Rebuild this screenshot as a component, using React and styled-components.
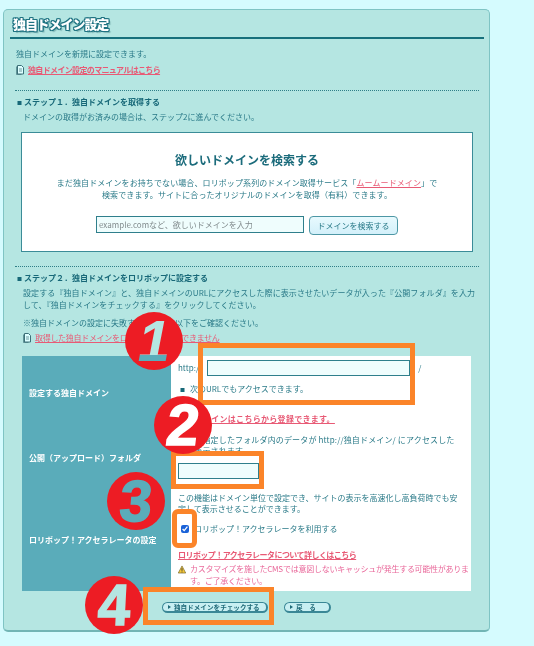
import React from "react";
import styled, { createGlobalStyle } from "styled-components";

const Global = createGlobalStyle`
  html, body { margin: 0; padding: 0; background: #d5fbfe; }
  body { width: 534px; height: 646px; overflow: hidden; font-family: "Noto Sans CJK JP", "Liberation Sans", sans-serif; font-size: 8px; line-height: 12px; color: #2a7a88; }
`;
const Page = styled.div`position: relative; width: 534px; height: 646px; padding: 9px 0 0 3px; box-sizing: border-box;`;
const Panel = styled.div`
  width: 487px; height: 623px; box-sizing: border-box; background: #b5e6e2; filter: blur(0.25px);
  border: 1px solid #7fc4c4; border-bottom: 2px solid #72b5b5; border-radius: 5px; padding: 5px 5px 0 6px;
`;
const Title = styled.h1`
  margin: 0; height: 22px; padding-left: 3px; border-bottom: 2px solid #17707c;
  font-size: 13px; line-height: 18px; font-weight: 900; color: #fff; letter-spacing: -1.1px;
  text-shadow: 1px 0 0 #1f7382, -1px 0 0 #1f7382, 0 1px 0 #1f7382, 0 -1px 0 #1f7382, 1px 1px 0 #1f7382, -1px -1px 0 #1f7382, 1px -1px 0 #1f7382, -1px 1px 0 #1f7382, 2px 2px 1px #7fb5b5;
`;
const Intro = styled.div`padding: 9px 0 0 6px; height: 42px;`;
const Line = styled.p`margin: 0 0 4px; height: 12px; white-space: nowrap;`;
const LinkRow = styled.div`display: flex; align-items: center; gap: 4px; height: 12px; white-space: nowrap; margin: ${p => p.$m || "0"};`;
const RedLink = styled.a`color: #e85a75; text-decoration: underline; font-weight: ${p => p.$bold ? 700 : 400}; letter-spacing: ${p => p.$ls || 0}px; white-space: nowrap;`;
const Divider = styled.div`border-top: 1px dotted #2f7f88; margin-left: 5px; width: 464px;`;
const Section = styled.section`padding: 5px 0 0 7px; height: ${p => p.$h}px; box-sizing: border-box;`;
const Heading = styled.h2`margin: 0; font-size: 8px; line-height: 12px; font-weight: 700; color: #176878; white-space: nowrap;`;
const Bullet = styled.span`display: inline-block; width: ${p => p.$w || 7}px; font-size: 5px; vertical-align: 1px; color: #176878;`;
const Desc = styled.p`margin: ${p => p.$mt ?? 3}px 0 0 6px; white-space: nowrap; letter-spacing: ${p => p.$ls || 0}px; line-height: 12px;`;
const SearchBox = styled.div`
  width: 452px; height: 120px; box-sizing: border-box; margin: 9px 0 0 4px; background: #fff; border: 1px solid #3b8c98;
  display: flex; flex-direction: column; align-items: center; padding-top: 19px;
`;
const SearchTitle = styled.h3`margin: 0; font-size: 12px; line-height: 16px; font-weight: 700; color: #1c6c7c;`;
const SearchText = styled.p`margin: 9px 0 0; text-align: center; line-height: 12px; letter-spacing: 0.1px; white-space: nowrap;`;
const SearchRow = styled.div`display: flex; gap: 5px; margin-top: 15px;`;
const TextInput = styled.input`
  display: block; box-sizing: border-box; width: ${p => p.$w}px; height: ${p => p.$h}px; background: #effdfd; border: 1px solid #2f7f8c;
  padding: 0 2px; font: 8px "Noto Sans CJK JP", sans-serif; margin: ${p => p.$mt || 0}px 0 0; outline: none; border-radius: 0;
  &::placeholder { color: #808a8c; opacity: 1; }
`;
const SearchButton = styled.button`
  width: 89px; height: 19px; padding: 0; border: 1px solid #4d97a5; border-radius: 4px; background: linear-gradient(#e8fafe, #d3f0fa);
  color: #2a7a88; font: 8px "Noto Sans CJK JP", sans-serif;
`;
const Table = styled.div`
  margin: 12px 0 0 5px; width: 449px; display: grid; grid-template-columns: 149px 300px; grid-template-rows: 73px 58px 104px;
`;
const Label = styled.div`
  background: #5aacba; color: #fff; font-weight: 700; display: flex; align-items: center; padding-left: 7px; white-space: nowrap;
  padding-top: ${p => p.$pt || 0}px; box-sizing: border-box;
`;
const Cell = styled.div`background: #fff; padding: 5px 0 0 7px; box-sizing: border-box;`;
const UrlRow = styled.div`display: flex; align-items: center; gap: 5px; height: 16px; white-space: nowrap; margin-top: -1px;`;
const Slash = styled.span`margin-left: 3px;`;
const CellLine = styled.p`margin: ${p => p.$mt || 0}px 0 0 ${p => p.$ml || 0}px; white-space: nowrap; letter-spacing: ${p => p.$ls || 0}px; line-height: ${p => p.$lh || 12}px;`;
const CheckRow = styled.label`display: flex; align-items: center; gap: 5px; margin: 9px 0 0 3px; height: 12px; white-space: nowrap;`;
const Check = styled.input`margin: 0; width: 8px; height: 8px; accent-color: #1a62d8;`;
const Warn = styled.div`display: flex; gap: 4px; margin-top: 2px; color: #e9689a; line-height: 12px; letter-spacing: -0.25px; white-space: nowrap;`;
const Actions = styled.div`display: flex; gap: 16px; padding: 11px 0 0 145px;`;
const ActionButton = styled.button`
  width: ${p => p.$w}px; height: 11px; padding: 0 0 0 11px; position: relative; box-sizing: border-box; border: 1px solid #3a8796; border-right-width: 2px; border-bottom-width: 2px;
  border-radius: 6px; background: #c8eff2; color: #1f6a78; font: 700 6.6px/8px "Noto Sans CJK JP", sans-serif; white-space: nowrap; text-align: left;
  &::before { content: ""; position: absolute; left: 5px; top: 2px; border-left: 3px solid #1f6a78; border-top: 2px solid transparent; border-bottom: 2px solid transparent; }
`;
const Mark = styled.div`
  position: absolute; left: ${p => p.$x}px; top: ${p => p.$y}px; width: 58px; height: 58px; border-radius: 50%; background: #ed1c24;
  display: flex; justify-content: center; filter: blur(0.3px);
`;
const Digit = styled.span`
  display: block; height: 58px; font: 700 58px/58px "Liberation Sans", sans-serif; color: ${p => p.$c};
  -webkit-text-stroke: 1.5px ${p => p.$c}; transform: skewX(-${p => p.$skew}deg);
`;
const SplitDigit = styled.span`
  display: block; height: 58px; font: italic 700 58px/58px "Liberation Sans", sans-serif; color: transparent;
  background: linear-gradient(#b5e6e2 43px, #5aacba 43px); -webkit-background-clip: text; background-clip: text;
`;
const OrangeBox = styled.div`
  position: absolute; left: ${p => p.$x}px; top: ${p => p.$y}px; width: ${p => p.$w}px; height: ${p => p.$h}px; box-sizing: border-box;
  border: 5px solid #fb8429; border-radius: ${p => p.$r || 0}px; pointer-events: none;
`;

const DocIcon = () => (
  <svg width="8" height="10" viewBox="0 0 8 10"><path d="M1.5.5h4l2 2v6.5h-6z" fill="#dff" stroke="#3c7078"/><path d="M.5 1.5v8h5" fill="none" stroke="#3c7078" strokeWidth=".7"/><path d="M3 4h3M3 6h3" stroke="#3c7078" strokeWidth=".7"/></svg>
);
const WarnIcon = () => (
  <svg width="8" height="9" viewBox="0 0 9 9" style={{ flex: "none", marginTop: 2 }}><path d="M4.5.5 8.7 8.5H.3z" fill="#f5c83a" stroke="#6a5a20" strokeWidth=".7"/><path d="M4.5 3v3M4.5 6.8v1" stroke="#333"/></svg>
);

export default function App() {
  return (
    <Page>
      <Global />
      <Panel>
        <Title>独自ドメイン設定</Title>
        <Intro>
          <Line>独自ドメインを新規に設定できます。</Line>
          <LinkRow><DocIcon /><RedLink href="#" $bold $ls={-0.65}>独自ドメイン設定のマニュアルはこちら</RedLink></LinkRow>
        </Intro>
        <Divider />
        <Section $h={175}>
          <Heading><Bullet>■</Bullet>ステップ１．独自ドメインを取得する</Heading>
          <Desc>ドメインの取得がお済みの場合は、ステップ2に進んでください。</Desc>
          <SearchBox>
            <SearchTitle>欲しいドメインを検索する</SearchTitle>
            <SearchText>まだ独自ドメインをお持ちでない場合、ロリポップ系列のドメイン取得サービス「<RedLink href="#" $ls={0.1}>ムームードメイン</RedLink>」で<br />検索できます。サイトに合ったオリジナルのドメインを取得（有料）できます。</SearchText>
            <SearchRow>
              <TextInput $w={208} $h={17} placeholder="example.comなど、欲しいドメインを入力" />
              <SearchButton>ドメインを検索する</SearchButton>
            </SearchRow>
          </SearchBox>
        </Section>
        <Divider />
        <Section $h={340}>
          <Heading><Bullet>■</Bullet>ステップ２．独自ドメインをロリポップに設定する</Heading>
          <Desc $ls={0.1}>設定する『独自ドメイン』と、独自ドメインのURLにアクセスした際に表示させたいデータが入った『公開フォルダ』を入力<br />して、『独自ドメインをチェックする』をクリックしてください。</Desc>
          <Desc $mt={6}>※独自ドメインの設定に失敗する場合は、以下をご確認ください。</Desc>
          <LinkRow $m="3px 0 0 6px"><DocIcon /><RedLink href="#" $ls={-0.3}>取得した独自ドメインをロリポップに設定できません</RedLink></LinkRow>
          <Table>
            <Label>設定する独自ドメイン</Label>
            <Cell>
              <UrlRow>http:// <TextInput $w={203} $h={16} /><Slash>/</Slash></UrlRow>
              <CellLine $mt={7} $ml={2}><Bullet $w={10}>■</Bullet>次のURLでもアクセスできます。</CellLine>
              <CellLine $mt={-3} $ml={25}>........</CellLine>
              <CellLine $mt={9}><RedLink href="#" $bold $ls={0.3}>独自ドメインはこちらから登録できます。</RedLink></CellLine>
            </Cell>
            <Label>公開（アップロード）フォルダ</Label>
            <Cell>
              <CellLine $lh={11} $ls={0.15}>ここで指定したフォルダ内のデータが http://独自ドメイン/ にアクセスした<br />際に表示されます。</CellLine>
              <TextInput $w={81} $h={16} $mt={7} />
            </Cell>
            <Label $pt={2}>ロリポップ！アクセラレータの設定</Label>
            <Cell>
              <CellLine $lh={11}>この機能はドメイン単位で設定でき、サイトの表示を高速化し高負荷時でも安<br />定して表示させることができます。</CellLine>
              <CheckRow><Check type="checkbox" defaultChecked readOnly />ロリポップ！アクセラレータを利用する</CheckRow>
              <CellLine $mt={14}><RedLink href="#" $bold $ls={-0.55}>ロリポップ！アクセラレータについて詳しくはこちら</RedLink></CellLine>
              <Warn><WarnIcon /><span>カスタマイズを施したCMSでは意図しないキャッシュが発生する可能性がありま<br />す。ご了承ください。</span></Warn>
            </Cell>
          </Table>
          <Actions>
            <ActionButton $w={106}>独自ドメインをチェックする</ActionButton>
            <ActionButton $w={47}>戻　る</ActionButton>
          </Actions>
        </Section>
      </Panel>
      <OrangeBox $x={198} $y={343} $w={217} $h={62} />
      <OrangeBox $x={171} $y={451} $w={93} $h={38} />
      <OrangeBox $x={172} $y={509} $w={25} $h={39} $r={6} />
      <OrangeBox $x={143} $y={587} $w={131} $h={38} />
      <Mark $x={125} $y={312}><SplitDigit>1</SplitDigit></Mark>
      <Mark $x={154} $y={396}><Digit $c="#fff" $skew={7}>2</Digit></Mark>
      <Mark $x={107} $y={472}><Digit $c="#5aacba" $skew={5}>3</Digit></Mark>
      <Mark $x={85} $y={576}><Digit $c="#b5e6e2" $skew={3}>4</Digit></Mark>
    </Page>
  );
}
